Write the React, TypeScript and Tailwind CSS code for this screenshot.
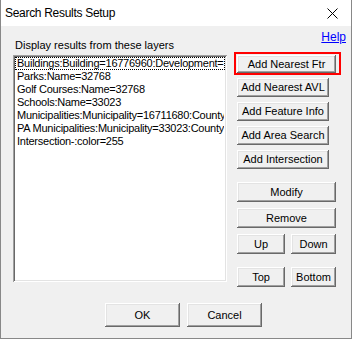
import React from "react";

const btn =
  "flex items-center justify-center bg-[#f0f0f0] text-black text-[11px] leading-none shadow-[inset_-1px_-1px_0_#696969,inset_1px_1px_0_#ffffff,inset_-2px_-2px_0_#a0a0a0,inset_2px_2px_0_#e3e3e3]";

function Btn({ label, className }: { label: string; className: string }) {
  return <div className={`${btn} ${className}`}>{label}</div>;
}

const items = [
  "Buildings:Building=16776960:Development=",
  "Parks:Name=32768",
  "Golf Courses:Name=32768",
  "Schools:Name=33023",
  "Municipalities:Municipality=16711680:County",
  "PA Municipalities:Municipality=33023:County",
  "Intersection-:color=255",
];

export default function App() {
  return (
    <div
      className="w-[352px] h-[339px] flex flex-col overflow-hidden"
      style={{ fontFamily: '"Liberation Sans", Arial, sans-serif' }}
    >
      <div className="h-[26px] bg-white flex items-center justify-between pl-[4px] pr-[13px] border-l border-r border-[#888888]">
        <span className="text-[12px] tracking-[-0.3px] text-black">Search Results Setup</span>
        <svg width="11" height="11" viewBox="0 0 11 11">
          <path d="M0.5 0.5 L10.5 10.5 M10.5 0.5 L0.5 10.5" stroke="#000" strokeWidth="1" />
        </svg>
      </div>
      <div className="flex-1 bg-[#f0f0f0] border-l border-r border-b border-[#888888] flex flex-col">
        <div className="flex">
          <div className="flex flex-col pl-[12px] pt-[13px] w-[226px]">
            <div className="text-[11px] leading-[13px] text-black pl-[2px]">
              Display results from these layers
            </div>
            <div className="mt-[3px] h-[227px] bg-white shadow-[inset_1px_1px_0_#a0a0a0,inset_-1px_-1px_0_#ffffff,inset_2px_2px_0_#696969,inset_-2px_-2px_0_#e3e3e3] pt-[2px] pl-[2px] pr-[2px] overflow-hidden">
              {items.map((t, i) => (
                <div
                  key={i}
                  className={`h-[13px] text-[11px] leading-[11px] tracking-[-0.25px] text-black whitespace-nowrap overflow-hidden pl-[1px] ${
                    i === 0 ? "border border-dotted border-black" : "border border-transparent"
                  }`}
                >
                  {t}
                </div>
              ))}
            </div>
          </div>
          <div className="flex flex-col ml-[7px] w-[112px]">
            <div className="flex justify-end pt-[4px] h-[26px]">
              <span className="text-[12px] leading-[15px] text-[#0000ff] underline">Help</span>
            </div>
            <div className="w-[107px] h-[23px] border-2 border-[#ff0000] pl-[1px] pt-[1px]">
              <Btn label="Add Nearest Ftr" className="w-[99px] h-[18px]" />
            </div>
            <div className="flex flex-col gap-[5px] mt-[3px] pl-[3px]">
              <Btn label="Add Nearest AVL" className="w-[92px] h-[19px]" />
              <Btn label="Add Feature Info" className="w-[92px] h-[19px]" />
              <Btn label="Add Area Search" className="w-[92px] h-[19px]" />
              <Btn label="Add Intersection" className="w-[92px] h-[19px]" />
            </div>
            <div className="flex flex-col gap-[6px] mt-[13px] pl-[3px]">
              <Btn label="Modify" className="w-[99px] h-[20px]" />
              <Btn label="Remove" className="w-[99px] h-[20px]" />
              <div className="flex gap-[6px]">
                <Btn label="Up" className="w-[48px] h-[20px]" />
                <Btn label="Down" className="w-[45px] h-[20px]" />
              </div>
              <div className="flex gap-[6px] mt-[7px]">
                <Btn label="Top" className="w-[48px] h-[20px]" />
                <Btn label="Bottom" className="w-[45px] h-[20px]" />
              </div>
            </div>
          </div>
        </div>
        <div className="flex gap-[7px] pl-[104px] mt-[16px]">
          <Btn label="OK" className="w-[75px] h-[24px]" />
          <Btn label="Cancel" className="w-[75px] h-[24px]" />
        </div>
      </div>
    </div>
  );
}
